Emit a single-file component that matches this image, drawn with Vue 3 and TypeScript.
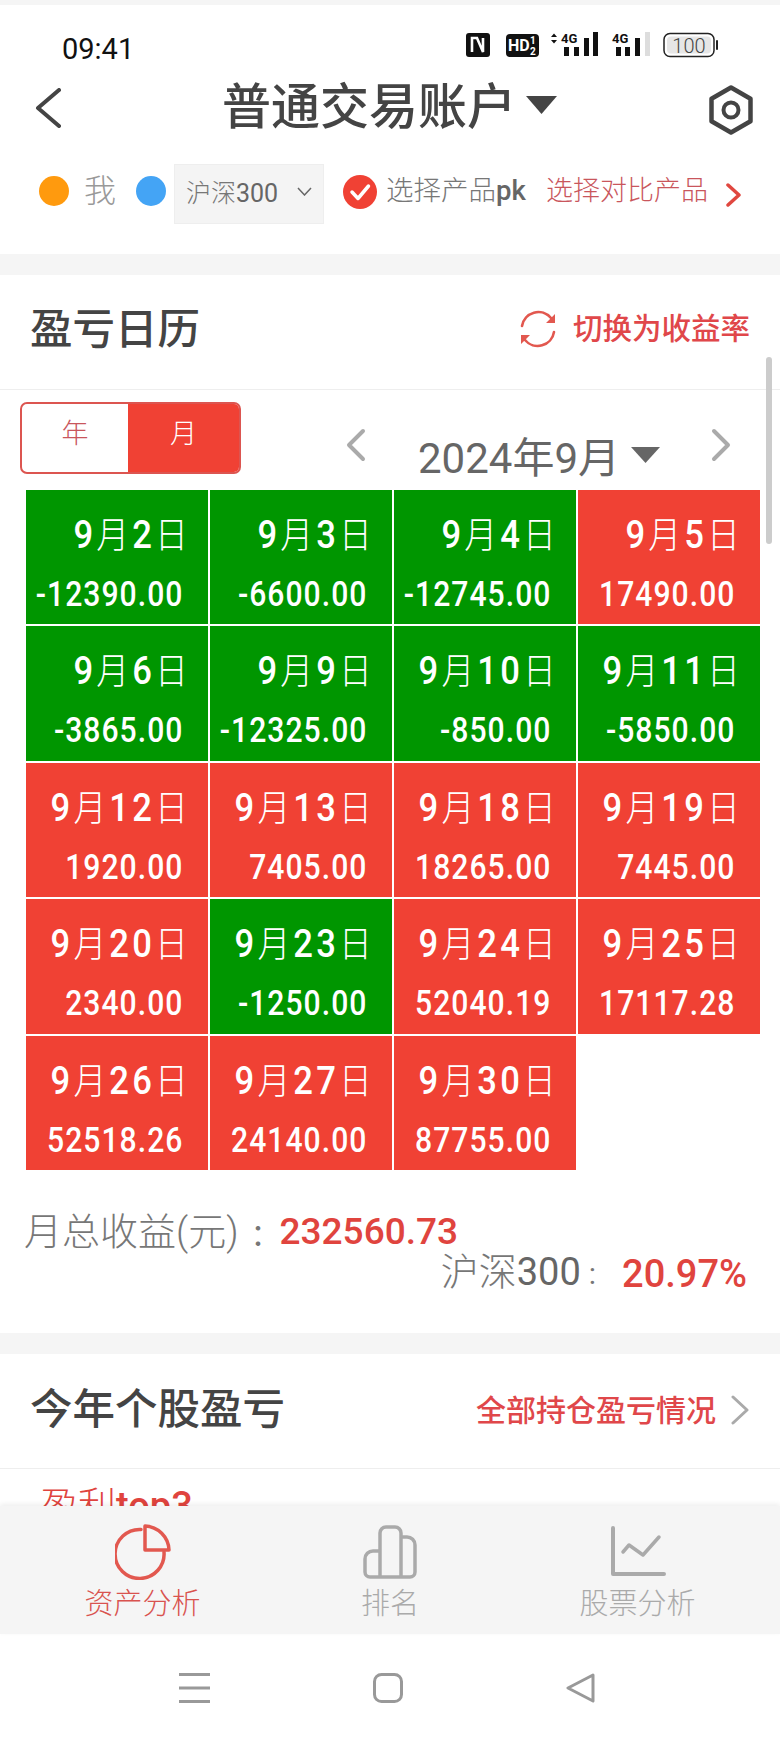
<script setup lang="ts">
interface Day { n: string; v: string; up: boolean }
const days: Day[] = [
  { n: '2', v: '-12390.00', up: false },
  { n: '3', v: '-6600.00', up: false },
  { n: '4', v: '-12745.00', up: false },
  { n: '5', v: '17490.00', up: true },
  { n: '6', v: '-3865.00', up: false },
  { n: '9', v: '-12325.00', up: false },
  { n: '10', v: '-850.00', up: false },
  { n: '11', v: '-5850.00', up: false },
  { n: '12', v: '1920.00', up: true },
  { n: '13', v: '7405.00', up: true },
  { n: '18', v: '18265.00', up: true },
  { n: '19', v: '7445.00', up: true },
  { n: '20', v: '2340.00', up: true },
  { n: '23', v: '-1250.00', up: false },
  { n: '24', v: '52040.19', up: true },
  { n: '25', v: '17117.28', up: true },
  { n: '26', v: '52518.26', up: true },
  { n: '27', v: '24140.00', up: true },
  { n: '30', v: '87755.00', up: true },
]
</script>

<template>
  <div class="page">
    <div class="content">
      <div class="band top"></div>
      <div class="status">
        <span class="time">09:41</span>
        <svg class="sys" width="262" height="30" viewBox="460 30 262 30">
          <rect x="466" y="33" width="24" height="24" rx="3" fill="#111" />
          <path d="M472 52V38l5 0 6 14h0V38" fill="none" stroke="#fff" stroke-width="2.6" />
          <rect x="506" y="34" width="33" height="23" rx="4" fill="#111" />
          <text x="508" y="51" class="t-hd">HD</text>
          <text x="530" y="44" class="t-sm">1</text>
          <text x="530" y="55" class="t-sm">2</text>
          <path d="M551 37l3-3.500 3 3.500zM551 40l3 3.500 3-3.500z" fill="#111" />
          <text x="561" y="43" class="t-4g">4G</text>
          <path d="M564 47h5v9h-5zM574 47h5v9h-5zM584 38h5v18h-5zM593 32h5v24h-5z" fill="#111" />
          <text x="612" y="43" class="t-4g">4G</text>
          <path d="M616 47h5v9h-5zM625 47h5v9h-5zM635 38h5v18h-5z" fill="#111" />
          <path d="M645 32h5v24h-5z" fill="#ddd" />
          <rect x="664" y="33.500" width="50" height="23" rx="6" fill="#fff" stroke="#222" stroke-width="1.500" />
          <rect x="667" y="36.500" width="44" height="17" rx="4" fill="#e6e6e6" />
          <rect x="716" y="40" width="2" height="10" rx="1" fill="#222" />
          <text x="689" y="52.500" text-anchor="middle" class="t-bat">100</text>
        </svg>
      </div>

      <div class="nav">
        <svg class="back" width="26" height="40" viewBox="0 0 26 40">
          <path d="M24 2 3 20l21 18" fill="none" stroke="#444" stroke-width="4" stroke-linecap="round" stroke-linejoin="round" />
        </svg>
        <span class="title">普通交易账户</span>
        <svg class="tri" width="31" height="18" viewBox="0 0 31 18"><path d="M0 0h31L15.500 18z" fill="#444" /></svg>
        <svg class="hex" width="44" height="50" viewBox="0 0 44 50">
          <path d="M22 2.500 41.500 13.800v22.400L22 47.500 2.500 36.200V13.800z" fill="none" stroke="#444" stroke-width="4.500" stroke-linejoin="round" />
          <circle cx="22" cy="25" r="7.500" fill="none" stroke="#444" stroke-width="4" />
        </svg>
      </div>

      <div class="filter">
        <i class="dot orange"></i>
        <span class="me">我</span>
        <i class="dot blue"></i>
        <div class="select">
          <span class="select-text">沪深<b>300</b></span>
          <svg width="15" height="9" viewBox="0 0 15 9"><path d="M1 1l6.500 7L14 1" fill="none" stroke="#666" stroke-width="1.500" /></svg>
        </div>
        <svg class="check" width="34" height="34" viewBox="0 0 34 34">
          <circle cx="17" cy="17" r="17" fill="#f04134" />
          <path d="M9 17l6 6.500L25.500 11" fill="none" stroke="#fff" stroke-width="3.500" stroke-linecap="round" stroke-linejoin="round" />
        </svg>
        <span class="pk">选择产品<b>pk</b></span>
        <span class="compare">选择对比产品</span>
        <svg class="go" width="15" height="24" viewBox="0 0 15 24"><path d="M2 2l11 10L2 22" fill="none" stroke="#e0473f" stroke-width="3.500" stroke-linecap="round" stroke-linejoin="round" /></svg>
      </div>

      <div class="band gap"></div>

      <div class="head">
        <span class="h-title">盈亏日历</span>
        <svg class="refresh" width="40" height="40" viewBox="0 0 40 40">
          <g fill="none" stroke="#e2584f" stroke-width="2.600" stroke-linecap="round">
            <path d="M4 17A16.500 16.500 0 0 1 33 9" />
            <path d="M36 23A16.500 16.500 0 0 1 7 31" />
          </g>
          <path d="M37 5v9h-9zM3 35v-9h9z" fill="#e2584f" />
        </svg>
        <span class="h-link">切换为收益率</span>
      </div>

      <div class="tools">
        <div class="toggle">
          <span class="seg">年</span>
          <span class="seg on">月</span>
        </div>
        <svg class="prev" width="20" height="34" viewBox="0 0 20 34"><path d="M17 3 3 17l14 14" fill="none" stroke="#aaa" stroke-width="4" stroke-linecap="round" stroke-linejoin="round" /></svg>
        <span class="month">2024年9月</span>
        <svg class="mtri" width="29" height="16" viewBox="0 0 29 16"><path d="M0 0h29L14.500 16z" fill="#666" /></svg>
        <svg class="next" width="20" height="34" viewBox="0 0 20 34"><path d="M3 3l14 14L3 31" fill="none" stroke="#aaa" stroke-width="4" stroke-linecap="round" stroke-linejoin="round" /></svg>
      </div>

      <div class="grid">
        <div v-for="c in days" :key="c.n" class="cell" :class="c.up ? 'up' : 'down'">
          <div class="date"><span class="num">9</span>月<span class="num">{{ c.n }}</span>日</div>
          <div class="amt">{{ c.v }}</div>
        </div>
      </div>

      <div class="summary">
        <div class="sum-a"><span class="lbl">月总收益(元)</span><span class="colon">：</span><span class="val small">232560.73</span></div>
        <div class="sum-b"><span class="lbl">沪深<em>300</em></span><span class="colon2">:</span><span class="val">20.97%</span></div>
      </div>

      <div class="band gap"></div>

      <div class="head two">
        <span class="h-title">今年个股盈亏</span>
        <span class="h-link">全部持仓盈亏情况</span>
        <svg class="gray-go" width="20" height="30" viewBox="0 0 20 30"><path d="M3 2l14 13L3 28" fill="none" stroke="#aaa" stroke-width="3" stroke-linecap="round" stroke-linejoin="round" /></svg>
      </div>
      <div class="top3">盈利<b>top3</b></div>
    </div>

    <div class="tabs">
      <div class="tab active">
        <svg width="56" height="56" viewBox="0 0 56 56">
          <g fill="none" stroke="#e2584f" stroke-width="3.500" stroke-linejoin="round" stroke-linecap="round">
            <path d="M26 5.500A24.500 24.500 0 1 0 49 28" />
            <path d="M30 2v24h24A25 25 0 0 0 30 2z" />
          </g>
        </svg>
        <span>资产分析</span>
      </div>
      <div class="tab">
        <svg width="56" height="56" viewBox="0 0 56 56">
          <g fill="none" stroke="#aaa" stroke-width="3.500" stroke-linejoin="round">
            <path d="M18 27h-7a8 8 0 0 0-8 8v13a5 5 0 0 0 5 5h40a5 5 0 0 0 5-5V21a8 8 0 0 0-8-8h-7" />
            <path d="M18 53V9a6 6 0 0 1 6-6h9a6 6 0 0 1 6 6v44" />
          </g>
        </svg>
        <span>排名</span>
      </div>
      <div class="tab">
        <svg width="56" height="56" viewBox="0 0 56 56">
          <g fill="none" stroke="#aaa" stroke-linecap="round" stroke-linejoin="round">
            <path d="M3 4v46h51" stroke-width="4" />
            <path d="M13 28l6-7 14 10 16-18" stroke-width="3.500" />
          </g>
        </svg>
        <span>股票分析</span>
      </div>
    </div>

    <div class="sysnav">
      <svg width="31" height="30" viewBox="0 0 31 30"><path d="M0 1.500h31M0 15h31M0 28.500h31" stroke="#999" stroke-width="3" /></svg>
      <svg width="30" height="30" viewBox="0 0 30 30"><rect x="1.500" y="1.500" width="27" height="27" rx="7" fill="none" stroke="#999" stroke-width="3" /></svg>
      <svg width="30" height="30" viewBox="0 0 30 30"><path d="M27 2 2 15l25 13z" fill="none" stroke="#999" stroke-width="3" stroke-linejoin="round" /></svg>
    </div>

    <i class="scroll"></i>
  </div>
</template>

<style>
html, body { margin: 0; background: #fff; }
</style>

<style scoped>
.page {
  position: relative;
  width: 780px;
  height: 1742px;
  display: flex;
  flex-direction: column;
  overflow: hidden;
  background: #fff;
  font-family: Roboto, "Noto Sans CJK SC", sans-serif;
  color: #444;
}
.content { flex: 1; min-height: 0; overflow: hidden; }
.band { background: #f5f5f5; }
.band.top { height: 5px; }
.band.gap { height: 21px; }

.status { height: 67px; display: flex; align-items: flex-start; }
.time { font-size: 29px; line-height: 34px; margin: 27px 0 0 62px; color: #111; }
.sys { margin: 25px 0 0 326px; }
.t-hd { font: 700 16px Roboto, sans-serif; fill: #fff; }
.t-sm { font: 700 10px Roboto, sans-serif; fill: #fff; }
.t-4g { font: 700 13px Roboto, sans-serif; fill: #111; }
.t-bat { font: 300 20px Roboto, sans-serif; fill: #444; }

.nav { height: 72px; display: flex; align-items: center; padding: 0 27px 0 35px; }
.back { margin-right: 161px; }
.title { font-size: 49px; line-height: 72px; font-weight: 500; color: #444; white-space: nowrap; }
.tri { margin: -6px 0 0 10px; }
.hex { margin-left: auto; margin-top: 4px; }

.filter { height: 110px; display: flex; align-items: flex-start; padding: 20px 0 0 39px; box-sizing: border-box; white-space: nowrap; }
.dot { width: 30px; height: 30px; border-radius: 50%; margin-top: 12px; display: block; }
.orange { background: #ff9a0e; }
.blue { background: #44a4f5; margin-left: 15px; }
.me { font-size: 32px; line-height: 54px; color: #999; font-weight: 300; margin-left: 15px; width: 37px; }
.select { width: 150px; height: 60px; box-sizing: border-box; margin-left: 8px; background: #f4f4f4; border: 1px solid #eee; display: flex; align-items: center; padding-left: 11px; }
.select-text { font-size: 25px; color: #777; font-weight: 300; width: 111px; margin-top: -6px; }
.select-text b { font-weight: 400; color: #666; }
.select svg { margin-top: -6px; }
.check { margin: 11px 0 0 19px; }
.pk { font-size: 27.500px; line-height: 54px; color: #777; font-weight: 300; margin-left: 9px; width: 160px; }
.pk b { font-weight: 500; color: #666; }
.compare { font-size: 27px; line-height: 54px; color: #c9565c; font-weight: 300; width: 180px; }
.go { margin-top: 19px; }

.head { height: 115px; box-sizing: border-box; border-bottom: 1px solid #eee; display: flex; align-items: flex-start; padding: 25px 30px 0 30px; }
.h-title { font-size: 42.500px; line-height: 60px; font-weight: 500; color: #444; white-space: nowrap; }
.refresh { margin: 9px 15px 0 auto; }
.h-link { font-size: 29.500px; line-height: 44px; font-weight: 500; color: #e0474a; margin-top: 7px; white-space: nowrap; }
.head.two { height: 115px; padding-top: 26px; }
.head.two .h-link { font-size: 30px; margin-left: auto; margin-top: 9px; }
.gray-go { margin: 15px 0 0 14px; }

.tools { height: 100px; display: flex; align-items: flex-start; padding: 12px 0 0 20px; box-sizing: border-box; }
.toggle { width: 221px; height: 72px; box-sizing: border-box; border: 2px solid #dc5550; border-radius: 7px; display: flex; overflow: hidden; }
.seg { flex: 0 0 106px; text-align: center; font-size: 27px; line-height: 60px; color: #c9565c; font-weight: 300; }
.seg.on { flex: 1; background: #f04134; color: #fff; }
.prev { margin: 26px 0 0 105px; }
.month { font-size: 42px; line-height: 50px; color: #666; margin: 32px 0 0 52px; white-space: nowrap; width: 213px; }
.mtri { margin-top: 45px; }
.next { margin: 26px 0 0 51px; }

.grid { margin-left: 26px; width: 734px; display: grid; grid-template-columns: repeat(4, 182px); grid-auto-rows: 134.400px; gap: 2px; }
.cell { color: #fff; padding-right: 22px; box-sizing: border-box; }
.up { background: #f04134; }
.down { background: #009600; }
.date { display: flex; justify-content: flex-end; align-items: baseline; font-size: 36px; line-height: 44px; letter-spacing: 3.500px; margin: 23px -5px 0 0; font-weight: 300; white-space: nowrap; transform: scaleX(0.91); transform-origin: right center; }
.num { font-size: 38px; font-weight: 500; }
.amt { display: flex; justify-content: flex-end; font-size: 35px; line-height: 40px; letter-spacing: 1.200px; margin-top: 17px; font-weight: 500; padding-right: 3px; white-space: nowrap; transform: scaleX(0.86); transform-origin: right center; }

.summary { height: 163px; box-sizing: border-box; padding-top: 42px; white-space: nowrap; }
.sum-a { display: flex; align-items: center; height: 40px; padding-left: 24px; }
.sum-b { display: flex; align-items: center; height: 44px; justify-content: flex-end; padding-right: 33px; }
.sum-b .lbl { margin-top: -4px; }
.lbl { font-size: 38px; line-height: 46px; color: #777; font-weight: 300; }
.lbl em { font-style: normal; font-weight: 400; color: #666; }
.colon { font-size: 30px; color: #777; margin: 0 0 0 12px; width: 29px; }
.colon2 { font-size: 30px; color: #777; margin: 0 26px 0 8px; }
.val { font-size: 38px; font-weight: 500; color: #e0443e; }
.val.small { font-size: 37px; }

.top3 { font-size: 38px; line-height: 40px; color: #e0443e; font-weight: 300; padding: 17px 0 0 40px; white-space: nowrap; }
.top3 b { font-weight: 500; }

.tabs { height: 128px; background: #f5f5f5; box-shadow: 0 -2px 5px rgba(0, 0, 0, 0.07); position: relative; display: flex; padding-top: 18px; box-sizing: border-box; }
.tab { flex: 0 0 auto; display: flex; flex-direction: column; align-items: center; font-size: 29px; line-height: 36px; color: #aaa; font-weight: 300; }
.tab:nth-child(1) { width: 285px; }
.tab:nth-child(2) { width: 210px; }
.tab:nth-child(3) { width: 285px; }
.tab span { margin-top: 6px; }
.active { color: #d9534f; }

.sysnav { height: 108px; background: #fff; display: flex; align-items: flex-start; padding: 39px 0 0 179px; box-sizing: border-box; gap: 163px; }

.scroll { position: absolute; left: 766px; top: 357px; width: 6px; height: 187px; border-radius: 3px; background: #ccc; }
</style>
